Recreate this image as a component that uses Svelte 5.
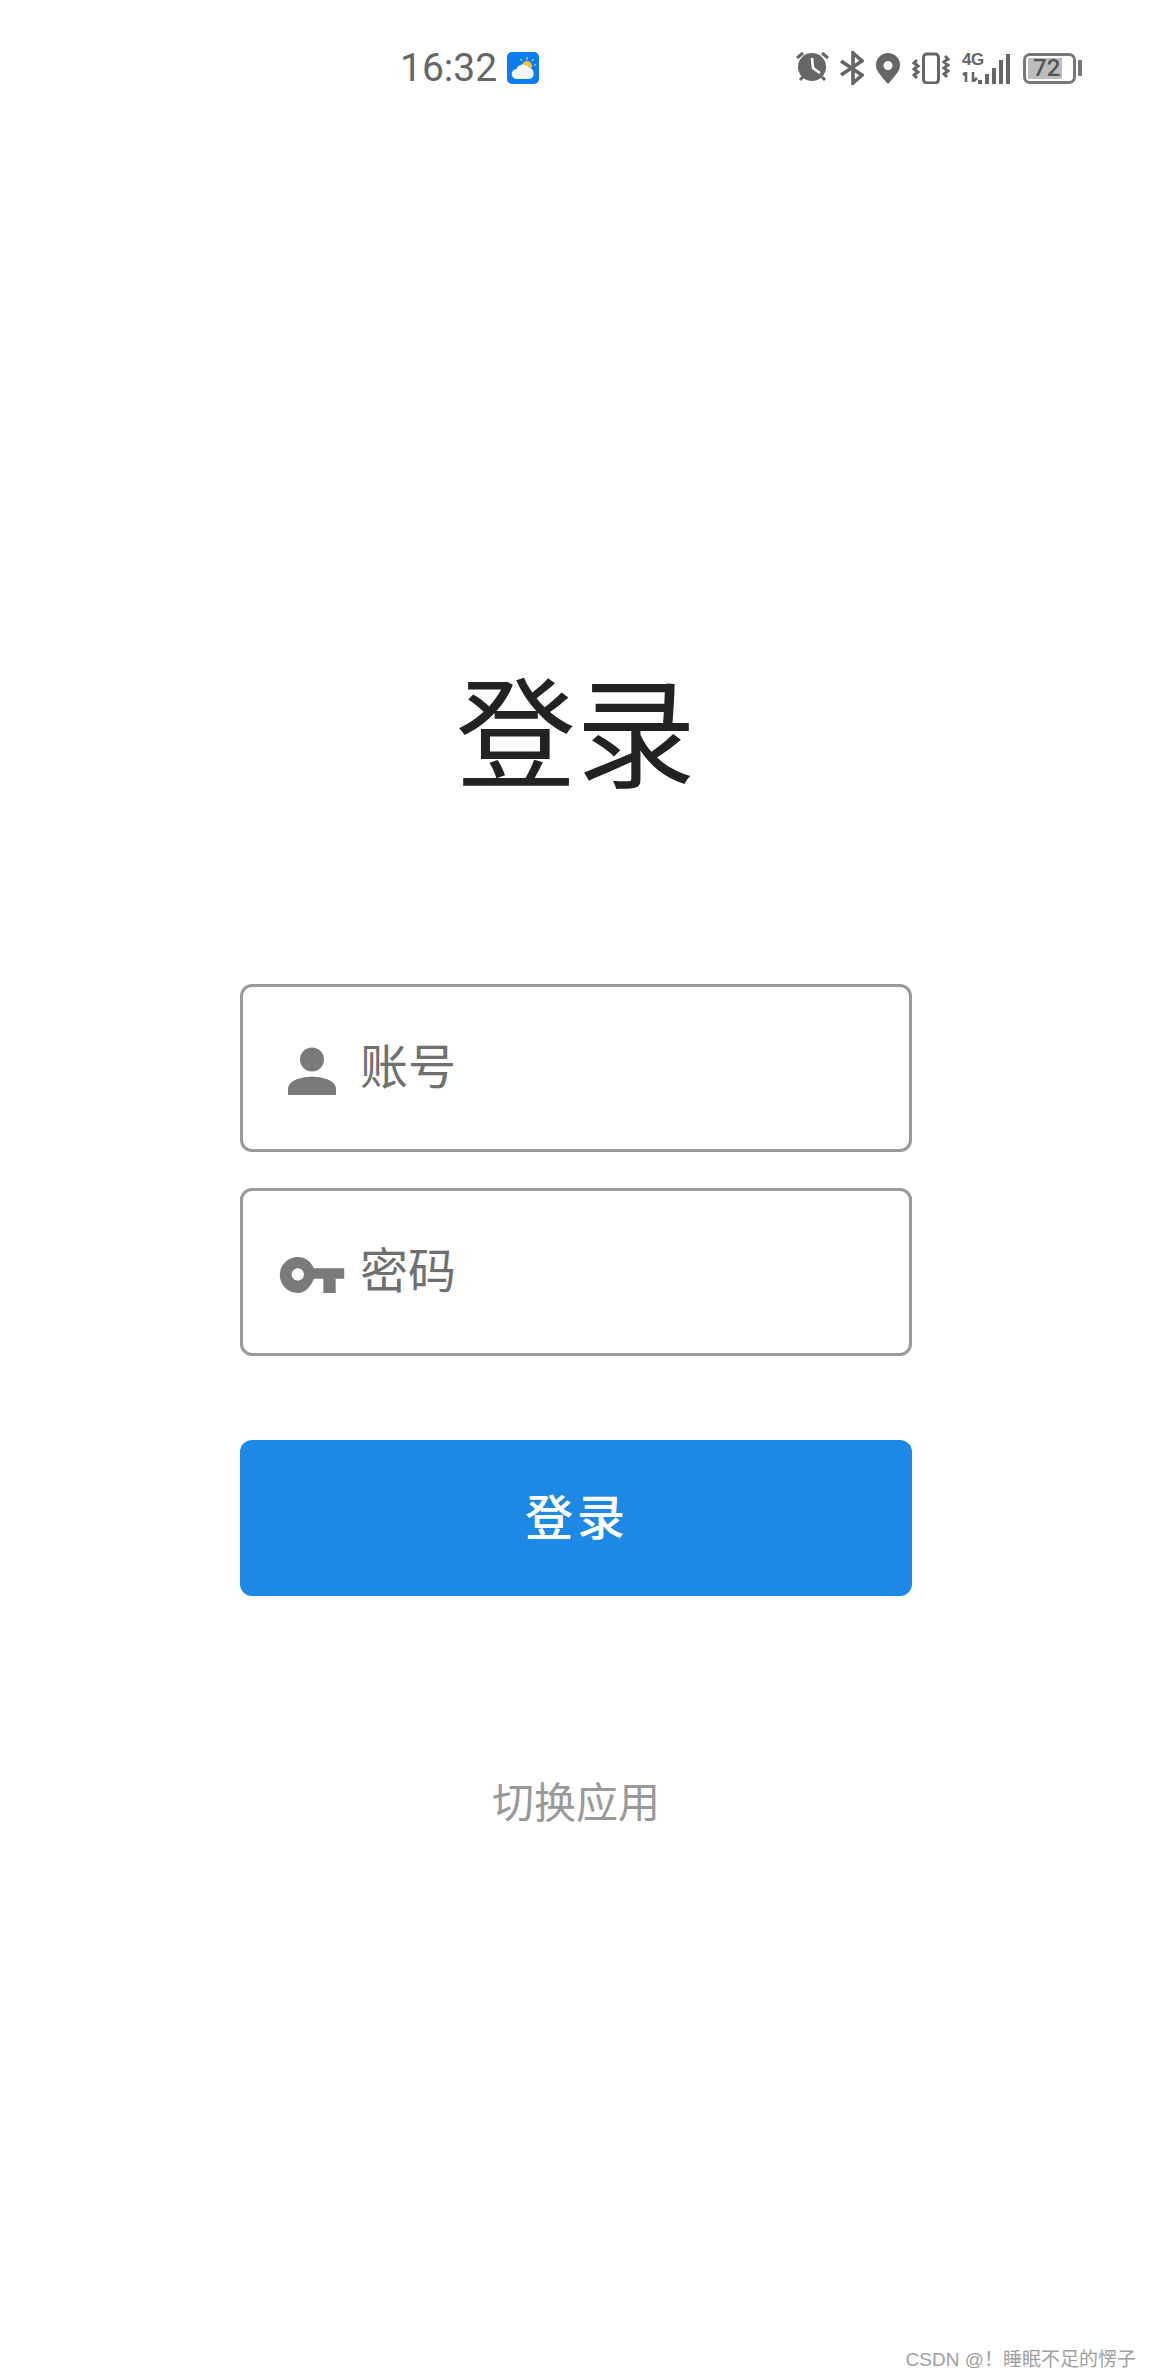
<script>
	let account = '';
	let password = '';
</script>

<div class="page">
	<header class="status">
		<div class="status-left">
			<span class="time">16:32</span>
			<svg class="weather" viewBox="0 0 32 32" width="32" height="32">
				<rect width="32" height="32" rx="5" fill="#0a7cf0" />
				<circle cx="20" cy="14" r="5" fill="#f5c13c" />
				<g stroke="#f5d98a" stroke-width="1.2">
					<path d="M20 5v3M13.500 7l1.600 2M26.500 7l-1.600 2M29 13h-2" />
				</g>
				<path d="M10 27a5 5 0 0 1-.6-10 7 7 0 0 1 12.600-1 5.600 5.600 0 0 1 .4 11z" fill="#f4f8fc" />
			</svg>
		</div>
		<div class="status-right">
			<svg width="34" height="34" viewBox="0 0 34 34">
				<circle cx="17" cy="16" r="14" fill="#666" />
				<path d="M17 7l1 10 7 5" fill="none" stroke="#fff" stroke-width="2.600" />
				<path d="M2 7l6-5M33 7l-6-5M5 29l3-3M30 29l-3-3" stroke="#666" stroke-width="3" />
			</svg>
			<svg width="24" height="34" viewBox="0 0 24 34">
				<path d="M1 10l21 14-9 8V2l9 8L1 24" fill="none" stroke="#666" stroke-width="3.600" />
			</svg>
			<svg width="26" height="32" viewBox="0 0 26 32">
				<path fill-rule="evenodd" d="M13 32C6 24 1 19 1 13a12 12 0 0 1 24 0c0 6-5 11-12 19zM13 9a4.500 4.500 0 1 0 .01 0z" fill="#666" />
			</svg>
			<svg width="38" height="32" viewBox="0 0 38 32">
				<rect x="11.500" y="2" width="15" height="29" rx="3.500" fill="none" stroke="#666" stroke-width="3" />
				<path d="M5 8L2 11l4 3-4 3 4 3-4 3 3 3M33 4l3 3-4 3 4 3-4 3 4 3-4 3 3 3" fill="none" stroke="#666" stroke-width="3" />
			</svg>
			<div class="signal">
				<div class="net">
					<span class="g4">4G</span>
					<svg width="16" height="10" viewBox="0 0 16 10">
						<path d="M4 0v10M1 3l3-3M11 0v10l4-4" fill="none" stroke="#666" stroke-width="2.600" />
					</svg>
				</div>
				<div class="bars">
					{#each [4, 10, 16, 24, 30] as h}
						<i style="height: {h}px"></i>
					{/each}
				</div>
			</div>
			<div class="battery">
				<div class="cell">
					<span class="level">72</span>
				</div>
				<b class="tip"></b>
			</div>
		</div>
	</header>

	<main class="login">
		<h1>登录</h1>

		<label class="field">
			<span class="icon">
				<svg width="48" height="48" viewBox="0 0 50 50">
					<circle cx="25" cy="13" r="12.500" fill="#7a7a7a" />
					<path d="M0 50v-6c0-9 13-13 25-13s25 4 25 13v6z" fill="#7a7a7a" />
				</svg>
			</span>
			<input type="text" placeholder="账号" bind:value={account} />
		</label>

		<label class="field">
			<span class="icon">
				<svg width="66" height="36" viewBox="0 0 68 38">
					<path fill-rule="evenodd" d="M19 0c8 0 14 5 17 12h32v11h-9v15H46V23H36c-3 8-9 15-17 15C8 38 0 29 0 19S8 0 19 0zm0 12a6.500 6.500 0 1 0 .01 0z" fill="#7a7a7a" />
				</svg>
			</span>
			<input type="password" placeholder="密码" bind:value={password} />
		</label>

		<button class="submit" type="button"><span>登录</span></button>

		<button class="switch" type="button">切换应用</button>
	</main>

	<div class="mark">CSDN @！睡眠不足的愣子</div>
</div>

<style>
	:global(body) {
		margin: 0;
		background: #fff;
		font-family: 'Noto Sans CJK SC', 'Liberation Sans', sans-serif;
	}

	.page {
		position: relative;
		height: 2376px;
		overflow: hidden;
		background: #fff;
	}

	.status {
		display: flex;
		justify-content: space-between;
		align-items: center;
		height: 136px;
		padding: 0 70px 0 400px;
		box-sizing: border-box;
	}

	.status-left {
		display: flex;
		align-items: center;
		gap: 10px;
	}

	.time {
		font-family: Roboto, 'Liberation Sans', sans-serif;
		font-size: 39px;
		font-weight: 400;
		color: #666;
	}

	.status-right {
		display: flex;
		align-items: center;
		gap: 11px;
		color: #666;
	}

	.signal {
		position: relative;
		width: 48px;
		height: 32px;
		margin-left: 1px;
	}

	.net {
		position: absolute;
		left: 0;
		top: 0;
		display: flex;
		flex-direction: column;
		gap: 5px;
	}

	.g4 {
		font-family: 'Liberation Sans', sans-serif;
		font-weight: 700;
		font-size: 17px;
		line-height: 15px;
		letter-spacing: -0.5px;
	}

	.bars {
		position: absolute;
		right: 0;
		bottom: 0;
		display: flex;
		align-items: flex-end;
		gap: 3px;
	}

	.bars i {
		display: block;
		width: 4px;
		background: #666;
	}

	.battery {
		display: flex;
		align-items: center;
		gap: 2px;
		margin-left: 2px;
	}

	.cell {
		box-sizing: border-box;
		width: 53px;
		height: 31px;
		padding: 2px;
		border: 3px solid #777;
		border-radius: 7px;
	}

	.level {
		display: block;
		box-sizing: border-box;
		width: 34px;
		height: 21px;
		background: #bdbdbd;
		font-family: Roboto, 'Liberation Sans', sans-serif;
		font-size: 24px;
		font-weight: 500;
		line-height: 21px;
		color: #555;
		padding-left: 5px;
		white-space: nowrap;
	}

	.tip {
		display: block;
		width: 4px;
		height: 16px;
		background: #777;
		border-radius: 1px;
	}

	.login {
		display: flex;
		flex-direction: column;
		align-items: center;
	}

	h1 {
		margin: 514px 0 180px;
		font-size: 120px;
		font-weight: 400;
		line-height: 154px;
		color: #222;
	}

	.field {
		box-sizing: border-box;
		display: flex;
		align-items: center;
		width: 672px;
		height: 168px;
		margin-bottom: 36px;
		border: 3px solid #9a9a9a;
		border-radius: 12px;
	}

	.icon {
		box-sizing: border-box;
		display: flex;
		justify-content: center;
		flex: none;
		width: 114px;
		padding-left: 24px;
		margin-top: 6px;
	}

	.field input {
		flex: 1;
		min-width: 0;
		border: 0;
		outline: 0;
		padding: 0;
		font-family: inherit;
		font-size: 48px;
		background: transparent;
		margin-left: 3px;
		margin-top: -11px;
	}

	.field input::placeholder {
		color: #707070;
		opacity: 1;
	}

	.submit {
		width: 672px;
		height: 156px;
		margin-top: 48px;
		padding: 0 0 8px 2px;
		border: 0;
		border-radius: 12px;
		background: #1e88e5;
		color: #fff;
		font-family: inherit;
		font-size: 48px;
		font-weight: 500;
		letter-spacing: 4px;
	}

	.switch {
		margin-top: 171px;
		padding: 0;
		border: 0;
		background: none;
		font-family: inherit;
		font-size: 42px;
		line-height: 66px;
		color: #999;
	}

	.mark {
		position: absolute;
		right: 16px;
		bottom: 5px;
		font-family: 'Liberation Sans', 'Noto Sans CJK SC', sans-serif;
		font-size: 19px;
		color: #a0a0a0;
	}
</style>
